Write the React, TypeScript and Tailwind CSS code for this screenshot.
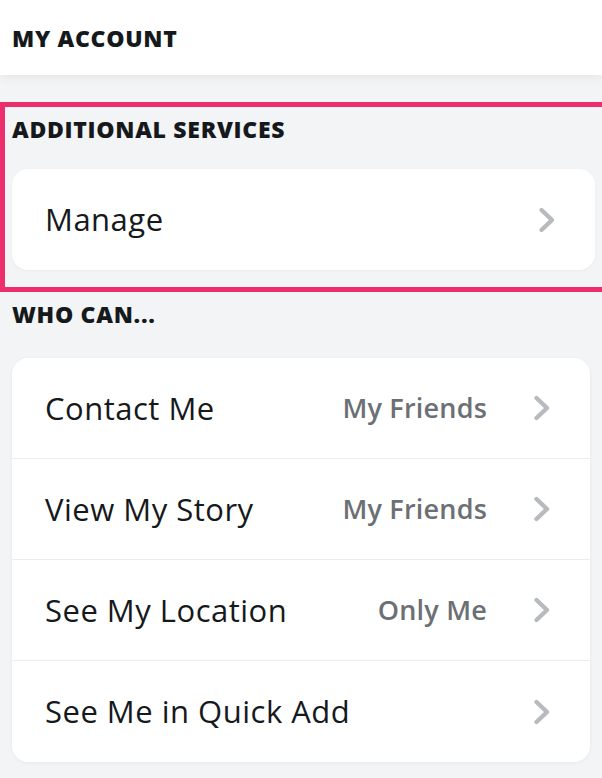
import React from 'react';

const font = { fontFamily: '"Open Sans", "Noto Sans", sans-serif' };

function Chevron() {
  return (
    <svg
      width="22"
      height="28"
      viewBox="0 0 22 28"
      fill="none"
      className="shrink-0"
    >
      <path
        d="M5.5 4 L16 14 L5.5 24"
        stroke="#b7babe"
        strokeWidth="4.4"
        strokeLinecap="round"
        strokeLinejoin="round"
      />
    </svg>
  );
}

function Row({
  label,
  value,
  last,
}: {
  label: string;
  value?: string;
  last?: boolean;
}) {
  return (
    <div
      className={`flex h-[101px] items-center pl-[33px] pr-[37px] ${
        last ? '' : 'border-b border-[#ececec]'
      }`}
    >
      <span className="flex-1 text-[31px] tracking-[0.5px] text-[#16191c]">
        {label}
      </span>
      {value && (
        <span className="mr-[44px] text-[27px] font-semibold tracking-[0.2px] text-[#6c7075]">
          {value}
        </span>
      )}
      <Chevron />
    </div>
  );
}

function Header({ children }: { children: React.ReactNode }) {
  return (
    <div className="text-[23px] font-extrabold leading-[28px] tracking-[0.7px] text-[#16191c]">
      {children}
    </div>
  );
}

export default function App() {
  return (
    <div className="h-[778px] w-[602px] overflow-hidden bg-[#f3f4f6]" style={font}>
      <div className="relative z-10 h-[75px] bg-white px-3 pt-[24px] shadow-[0_3px_10px_rgba(0,0,0,0.06)]">
        <Header>MY ACCOUNT</Header>
      </div>

      <div className="mt-[27px] mr-[-6px] h-[190px] border-[5px] border-[#ec2f6c] pt-[8px]">
        <div className="px-[7px]">
          <Header>ADDITIONAL SERVICES</Header>
        </div>
        <div className="mt-[26px] mr-[8px] ml-[7px] overflow-hidden rounded-2xl bg-white shadow-[0_1px_3px_rgba(0,0,0,0.04)]">
          <Row label="Manage" last />
        </div>
      </div>

      <div className="px-3 pt-[8px]">
        <Header>WHO CAN...</Header>
      </div>
      <div className="mx-3 mt-[30px] overflow-hidden rounded-2xl bg-white shadow-[0_1px_4px_rgba(0,0,0,0.05)]">
        <Row label="Contact Me" value="My Friends" />
        <Row label="View My Story" value="My Friends" />
        <Row label="See My Location" value="Only Me" />
        <Row label="See Me in Quick Add" last />
      </div>
    </div>
  );
}
